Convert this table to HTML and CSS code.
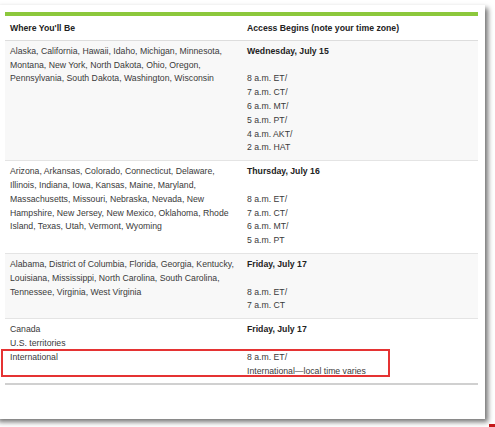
FILE: index.html
```html
<!DOCTYPE html>
<html>
<head>
<meta charset="utf-8">
<link rel="stylesheet" href="styles.css">
</head>
<body>
<div class="card">
  <table class="schedule">
    <thead>
      <tr><th class="c1">Where You'll Be</th><th>Access Begins (note your time zone)</th></tr>
    </thead>
    <tbody>
      <tr class="alt">
        <td class="c1">Alaska, California, Hawaii, Idaho, Michigan, Minnesota,<br>Montana, New York, North Dakota, Ohio, Oregon,<br>Pennsylvania, South Dakota, Washington, Wisconsin</td>
        <td><b>Wednesday, July 15</b><br><br>8 a.m. ET/<br>7 a.m. CT/<br>6 a.m. MT/<br>5 a.m. PT/<br>4 a.m. AKT/<br>2 a.m. HAT</td>
      </tr>
      <tr>
        <td class="c1">Arizona, Arkansas, Colorado, Connecticut, Delaware,<br>Illinois, Indiana, Iowa, Kansas, Maine, Maryland,<br>Massachusetts, Missouri, Nebraska, Nevada, New<br>Hampshire, New Jersey, New Mexico, Oklahoma, Rhode<br>Island, Texas, Utah, Vermont, Wyoming</td>
        <td><b>Thursday, July 16</b><br><br>8 a.m. ET/<br>7 a.m. CT/<br>6 a.m. MT/<br>5 a.m. PT</td>
      </tr>
      <tr class="alt">
        <td class="c1">Alabama, District of Columbia, Florida, Georgia, Kentucky,<br>Louisiana, Mississippi, North Carolina, South Carolina,<br>Tennessee, Virginia, West Virginia</td>
        <td><b>Friday, July 17</b><br><br>8 a.m. ET/<br>7 a.m. CT</td>
      </tr>
      <tr class="last">
        <td class="c1">Canada<br>U.S. territories<br>International</td>
        <td><b>Friday, July 17</b><br><br>8 a.m. ET/<br>International—local time varies</td>
      </tr>
    </tbody>
  </table>
  <div class="highlight"></div>
</div>
<div class="corner-mark"></div>
</body>
</html>
```
FILE: styles.css
```css
html, body {
  margin: 0;
  padding: 0;
  background: #ffffff;
}
body {
  position: relative;
  width: 495px;
  height: 427px;
  overflow: hidden;
  font-family: "Liberation Sans", Arial, Helvetica, sans-serif;
}
.card {
  position: relative;
  box-sizing: border-box;
  width: 490px;
  height: 414px;
  margin: 5px 0 0 -5px;
  padding: 7px 0 0 10px;
  background: #ffffff;
  box-shadow: 3px 3px 5px rgba(0, 0, 0, 0.55);
}
.schedule {
  width: 473px;
  border-collapse: collapse;
  border-top: 4px solid #8cc83c;
  border-bottom: 2px solid #d0d0d0;
  font-size: 8.7px;
  line-height: 13.8px;
  color: #3a3a3a;
  table-layout: fixed;
}
.schedule th {
  text-align: left;
  font-weight: bold;
  color: #222222;
  padding: 6px 5px 4px 5px;
  border-bottom: 1px solid #dddddd;
}
.schedule td {
  vertical-align: top;
  padding: 4px 5px 5px 5px;
  border-bottom: 1px solid #e4e4e4;
}
.schedule .c1 {
  width: 227px;
}
.schedule b {
  color: #222222;
}
.schedule tr.alt td {
  background: #f8f8f8;
}
.schedule tr.last td {
  border-bottom: none;
}
.highlight {
  position: absolute;
  left: 6px;
  top: 344px;
  width: 385px;
  height: 24px;
  border: 2px solid #e53333;
}
.corner-mark {
  position: absolute;
  left: 489px;
  top: 424px;
  width: 6px;
  height: 3px;
  background: #c41a1a;
}
```
